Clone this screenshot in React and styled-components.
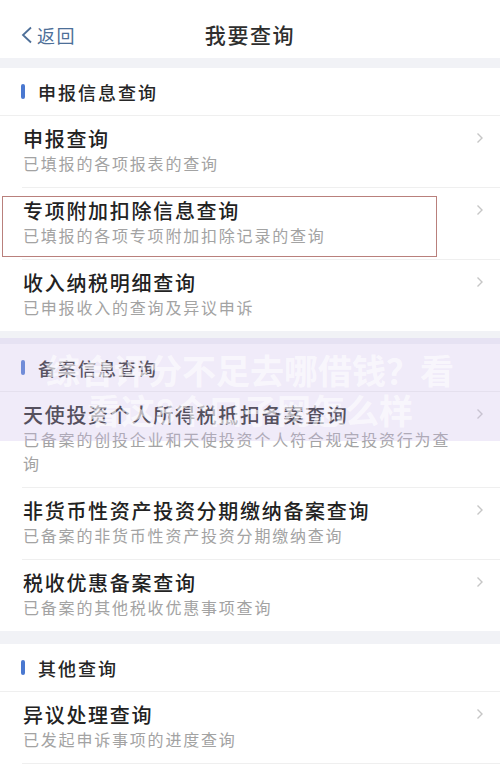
import React from "react";
import styled, { createGlobalStyle } from "styled-components";

const Global = createGlobalStyle`
  html, body { margin: 0; padding: 0; background: #ffffff; }
  body { font-family: "Noto Sans CJK SC", "Noto Sans", sans-serif; }
  * { box-sizing: border-box; }
`;

const Page = styled.div`
  position: relative;
  width: 500px;
  min-height: 780px;
  background: #ffffff;
  overflow: hidden;
`;

const Header = styled.header`
  height: 58px;
  padding-top: 10px;
  display: flex;
  align-items: center;
  position: relative;
  justify-content: center;
`;

const Back = styled.div`
  position: absolute;
  left: 20px;
  top: 23px;
  display: flex;
  align-items: center;
  gap: 4px;
  color: #4d6f98;
  font-size: 18px;
  letter-spacing: 1.5px;
  line-height: 24px;
`;

const Title = styled.h1`
  margin: 0;
  font-size: 21px;
  font-weight: 500;
  letter-spacing: 1.6px;
  color: #2e2e2e;
  line-height: 28px;
`;

const Gap = styled.div`
  height: ${(p) => p.$h}px;
  background: #f1f2f6;
`;

const SectionHeader = styled.div`
  height: 48px;
  display: flex;
  align-items: center;
  gap: 13px;
  padding-left: 21px;
  border-bottom: 1px solid #efefef;
  font-size: 18px;
  font-weight: 500;
  letter-spacing: 2px;
  color: #262626;
`;

const Bar = styled.span`
  width: 4px;
  height: 15px;
  border-radius: 2px;
  background: #4a78d0;
`;

const Row = styled.div`
  position: relative;
  display: flex;
  align-items: flex-start;
  margin-left: 22px;
  padding: 11px 16px 12px 1px;
  border-bottom: ${(p) => (p.$last ? "none" : "1px solid #efefef")};
`;

const TextBlock = styled.div`
  width: 435px;
`;

const ItemTitle = styled.div`
  font-size: 20px;
  font-weight: 500;
  letter-spacing: 1.7px;
  line-height: 24px;
  color: #222222;
`;

const ItemSub = styled.div`
  font-size: 16px;
  letter-spacing: 1.8px;
  line-height: 24px;
  color: #a3a3a3;
`;

const Arrow = styled.div`
  margin-left: auto;
  height: 22px;
  display: flex;
  align-items: center;
`;

const Highlight = styled.div`
  position: absolute;
  left: -20px;
  top: 8px;
  width: 435px;
  height: 61px;
  border: 1.5px solid #b9807c;
  pointer-events: none;
`;

const Watermark = styled.div`
  position: absolute;
  left: 0;
  right: 0;
  top: 338px;
  height: 103px;
  padding-top: 12px;
  background: rgba(205, 190, 235, 0.3);
  color: rgba(255, 255, 255, 0.62);
  font-size: 34px;
  font-weight: 700;
  line-height: 40px;
  text-align: center;
  pointer-events: none;
`;

const Chevron = () => (
  <svg width="8" height="12" viewBox="0 0 8 12">
    <path d="M1.5 1.5 L6 6 L1.5 10.5" fill="none" stroke="#c6c6c6" strokeWidth="1.4" />
  </svg>
);

const BackChevron = () => (
  <svg width="13" height="18" viewBox="0 0 13 18">
    <path d="M11 1.5 L3 9 L11 16.5" fill="none" stroke="#4d6f98" strokeWidth="1.8" />
  </svg>
);

const Item = ({ title, sub, last, highlight }) => (
  <Row $last={last}>
    <TextBlock>
      <ItemTitle>{title}</ItemTitle>
      <ItemSub>{sub}</ItemSub>
    </TextBlock>
    <Arrow>
      <Chevron />
    </Arrow>
    {highlight && <Highlight />}
  </Row>
);

const sections = [
  {
    name: "申报信息查询",
    items: [
      { title: "申报查询", sub: "已填报的各项报表的查询" },
      { title: "专项附加扣除信息查询", sub: "已填报的各项专项附加扣除记录的查询", highlight: true },
      { title: "收入纳税明细查询", sub: "已申报收入的查询及异议申诉" },
    ],
    gapAfter: 13,
    lastNoLine: true,
  },
  {
    name: "备案信息查询",
    items: [
      { title: "天使投资个人所得税抵扣备案查询", sub: "已备案的创投企业和天使投资个人符合规定投资行为查询" },
      { title: "非货币性资产投资分期缴纳备案查询", sub: "已备案的非货币性资产投资分期缴纳查询" },
      { title: "税收优惠备案查询", sub: "已备案的其他税收优惠事项查询" },
    ],
    gapAfter: 13,
    lastNoLine: true,
  },
  {
    name: "其他查询",
    items: [{ title: "异议处理查询", sub: "已发起申诉事项的进度查询" }],
    gapAfter: 0,
    lastNoLine: false,
  },
];

export default function App() {
  return (
    <Page>
      <Global />
      <Header>
        <Back>
          <BackChevron />
          <span>返回</span>
        </Back>
        <Title>我要查询</Title>
      </Header>
      <Gap $h={10} />
      {sections.map((s) => (
        <section key={s.name}>
          <SectionHeader>
            <Bar />
            <span>{s.name}</span>
          </SectionHeader>
          {s.items.map((it, i) => (
            <Item
              key={it.title}
              {...it}
              last={s.lastNoLine && i === s.items.length - 1}
            />
          ))}
          {s.gapAfter > 0 && <Gap $h={s.gapAfter} />}
        </section>
      ))}
      <Watermark>
        综合评分不足去哪借钱？看
        <br />
        看这8个口子网怎么样
      </Watermark>
    </Page>
  );
}
